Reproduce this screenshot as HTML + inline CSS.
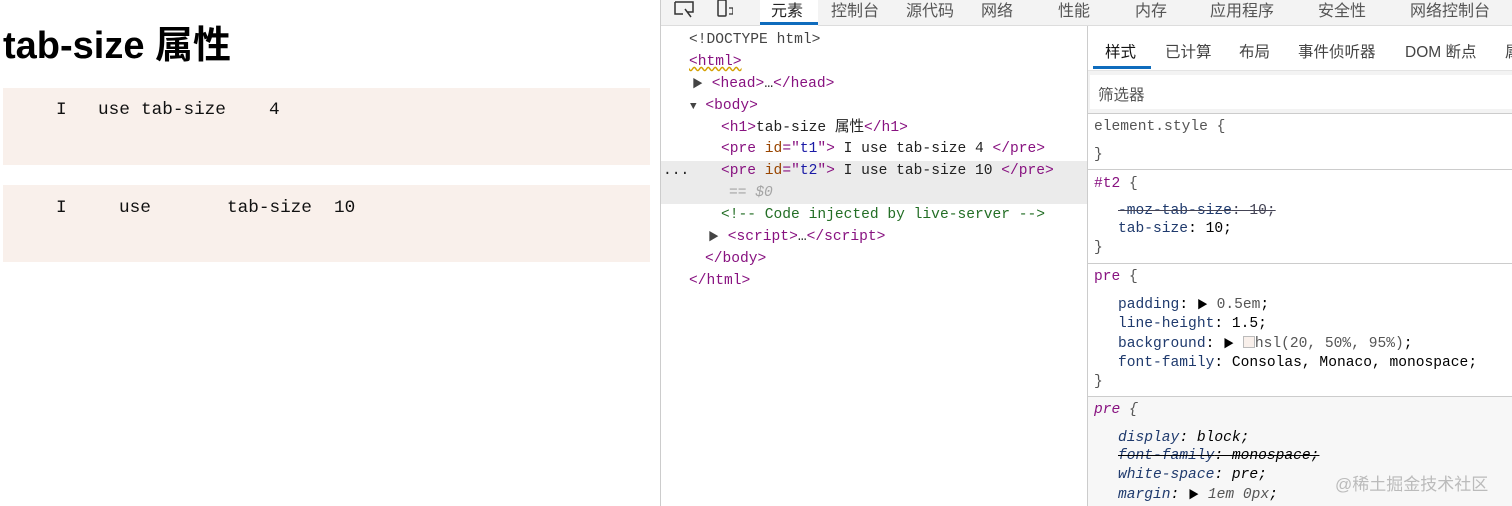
<!DOCTYPE html>
<html><head><meta charset="utf-8"><style>
*{margin:0;padding:0;box-sizing:border-box}
body{width:1512px;height:506px;overflow:hidden;background:#fff;position:relative;font-family:"Liberation Sans","Noto Sans CJK SC",sans-serif}
.a{position:absolute;white-space:pre}
.m{font-family:"Liberation Mono","Noto Sans CJK SC",monospace;font-size:14.6px;line-height:18px}
.pm{font-family:"Liberation Mono",monospace;font-size:17.7px;color:#111}
.tag{color:#881280}.at{color:#994500}.av{color:#1a1aa6}.tx{color:#222}.br{color:#a5a5a5}
.p{color:#1f3a6d}.v{color:#222}.cm{color:#236e25}
.tab{font-size:16px;color:#555;top:-3px}
.st{font-size:15.5px;color:#444;top:40px}
</style></head><body>
<div class="a" style="left:3px;top:14px;font-size:38px;font-weight:bold;color:#000">tab-size 属性</div>
<div class="a" style="left:3px;top:88px;width:647px;height:77px;background:#f9f0eb"></div>
<div class="a" style="left:3px;top:185px;width:647px;height:77px;background:#f9f0eb"></div>
<div class="a pm" style="left:56px;top:100px">I</div><div class="a pm" style="left:98px;top:100px">use</div><div class="a pm" style="left:141px;top:100px">tab-size</div><div class="a pm" style="left:269px;top:100px">4</div>
<div class="a pm" style="left:56px;top:198px">I</div><div class="a pm" style="left:119px;top:198px">use</div><div class="a pm" style="left:227px;top:198px">tab-size</div><div class="a pm" style="left:334px;top:198px">10</div>

<div class="a" style="left:660px;top:0;width:1px;height:506px;background:#ccc"></div>
<div class="a" style="left:661px;top:0;width:851px;height:26px;background:#f3f3f3;border-bottom:1px solid #ddd"></div>
<svg class="a" style="left:673px;top:0" width="60" height="20"><path d="M2 2h18v10h-6 M2 2v12h8" fill="none" stroke="#333" stroke-width="1.5"/><path d="M12 9l6 8" stroke="#333" stroke-width="1.5"/><rect x="45" y="0" width="8" height="16" rx="1" fill="none" stroke="#333" stroke-width="1.5"/><path d="M56 8h4v6h-4" fill="none" stroke="#333" stroke-width="1.3"/></svg>
<div class="a" style="left:760px;top:0;width:58px;height:26px;background:#fff"></div>
<div class="a" style="left:760px;top:22px;width:58px;height:3px;background:#0f6cbd"></div>
<div class="a tab" style="left:771px;color:#222">元素</div>
<div class="a tab" style="left:831px">控制台</div><div class="a tab" style="left:906px">源代码</div><div class="a tab" style="left:981px">网络</div><div class="a tab" style="left:1058px">性能</div><div class="a tab" style="left:1135px">内存</div><div class="a tab" style="left:1210px">应用程序</div><div class="a tab" style="left:1318px">安全性</div><div class="a tab" style="left:1410px">网络控制台</div>

<div class="a" style="left:661px;top:161px;width:426px;height:43px;background:#ebebeb"></div>
<div class="a m" style="left:689px;top:31px;color:#444">&lt;!DOCTYPE html&gt;</div>
<div class="a m tag" style="left:689px;top:53px;text-decoration:underline wavy #d4a000">&lt;html&gt;</div>
<div class="a m" style="left:692px;top:75px"><span style="color:#444;font-size:11px">▶</span> <span class="tag">&lt;head&gt;</span><span class="tx">…</span><span class="tag">&lt;/head&gt;</span></div>
<div class="a m" style="left:690px;top:97px"><span style="color:#444;font-size:11px">▼</span> <span class="tag">&lt;body&gt;</span></div>
<div class="a m" style="left:721px;top:119px"><span class="tag">&lt;h1&gt;</span><span class="tx">tab-size 属性</span><span class="tag">&lt;/h1&gt;</span></div>
<div class="a m" style="left:721px;top:140px"><span class="tag">&lt;pre </span><span class="at">id</span><span class="tag">="</span><span class="av">t1</span><span class="tag">"&gt;</span><span class="tx"> I use tab-size 4 </span><span class="tag">&lt;/pre&gt;</span></div>
<div class="a m" style="left:663px;top:162px;color:#222">...</div>
<div class="a m" style="left:721px;top:162px"><span class="tag">&lt;pre </span><span class="at">id</span><span class="tag">="</span><span class="av">t2</span><span class="tag">"&gt;</span><span class="tx"> I use tab-size 10 </span><span class="tag">&lt;/pre&gt;</span></div>
<div class="a m br" style="left:729px;top:184px;font-style:italic">== $0</div>
<div class="a m cm" style="left:721px;top:206px">&lt;!-- Code injected by live-server --&gt;</div>
<div class="a m" style="left:708px;top:228px"><span style="color:#444;font-size:11px">▶</span> <span class="tag">&lt;script&gt;</span><span class="tx">…</span><span class="tag">&lt;/script&gt;</span></div>
<div class="a m tag" style="left:705px;top:250px">&lt;/body&gt;</div>
<div class="a m tag" style="left:689px;top:272px">&lt;/html&gt;</div>

<div class="a" style="left:1087px;top:26px;width:1px;height:480px;background:#ccc"></div>
<div class="a" style="left:1088px;top:70px;width:424px;height:1px;background:#e4e4e4"></div>
<div class="a st" style="left:1105px;color:#111">样式</div><div class="a st" style="left:1165px">已计算</div><div class="a st" style="left:1239px">布局</div><div class="a st" style="left:1298px">事件侦听器</div><div class="a st" style="left:1405px">DOM 断点</div><div class="a st" style="left:1505px">属</div>
<div class="a" style="left:1093px;top:66px;width:58px;height:3px;background:#0f6cbd"></div>
<div class="a" style="left:1088px;top:71px;width:424px;height:42px;background:#f3f3f3"></div>
<div class="a" style="left:1090px;top:75px;width:422px;height:34px;background:#fff"></div>
<div class="a" style="left:1098px;top:83px;font-size:15.5px;color:#555">筛选器</div>
<div class="a" style="left:1088px;top:113px;width:424px;height:1px;background:#ccc"></div>
<div class="a m" style="left:1094px;top:118px;color:#555">element.style {</div>
<div class="a m" style="left:1094px;top:146px;color:#555">}</div>
<div class="a" style="left:1088px;top:169px;width:424px;height:1px;background:#ccc"></div>
<div class="a m" style="left:1094px;top:175px"><span class="tag">#t2</span> <span style="color:#555">{</span></div>
<div class="a m" style="left:1118px;top:202px;text-decoration:line-through;color:#445"><span class="p">-moz-tab-size</span>: 10;</div>
<div class="a m" style="left:1118px;top:220px"><span class="p">tab-size</span>: 10;</div>
<div class="a m" style="left:1094px;top:239px;color:#555">}</div>
<div class="a" style="left:1088px;top:263px;width:424px;height:1px;background:#ccc"></div>
<div class="a m" style="left:1094px;top:268px"><span class="tag">pre</span> <span style="color:#555">{</span></div>
<div class="a m" style="left:1118px;top:296px"><span class="p">padding</span>: <span style="font-size:11px">▶</span> <span style="color:#555">0.5em</span>;</div>
<div class="a m" style="left:1118px;top:315px"><span class="p">line-height</span>: 1.5;</div>
<div class="a m" style="left:1118px;top:335px"><span class="p">background</span>: <span style="font-size:11px">▶</span> <span style="display:inline-block;width:12px;height:12px;border:1px solid #bbb;background:#f9f0eb;vertical-align:-1px"></span><span style="color:#555">hsl(20, 50%, 95%)</span>;</div>
<div class="a m" style="left:1118px;top:354px"><span class="p">font-family</span>: Consolas, Monaco, monospace;</div>
<div class="a m" style="left:1094px;top:373px;color:#555">}</div>
<div class="a" style="left:1088px;top:396px;width:424px;height:110px;background:#f7f7f7;border-top:1px solid #ccc"></div>
<div class="a m" style="left:1094px;top:401px;font-style:italic"><span class="tag">pre</span> <span style="color:#555">{</span></div>
<div class="a m" style="left:1118px;top:429px;font-style:italic"><span class="p">display</span>: block;</div>
<div class="a m" style="left:1118px;top:447px;font-style:italic;text-decoration:line-through"><span class="p">font-family</span>: monospace;</div>
<div class="a m" style="left:1118px;top:466px;font-style:italic"><span class="p">white-space</span>: pre;</div>
<div class="a m" style="left:1118px;top:486px;font-style:italic"><span class="p">margin</span>: <span style="font-size:11px;font-style:normal">▶</span> <span style="color:#555">1em 0px</span>;</div>
<div class="a" style="left:1335px;top:470px;font-size:17px;color:#bbb">@稀土掘金技术社区</div>
</body></html>
